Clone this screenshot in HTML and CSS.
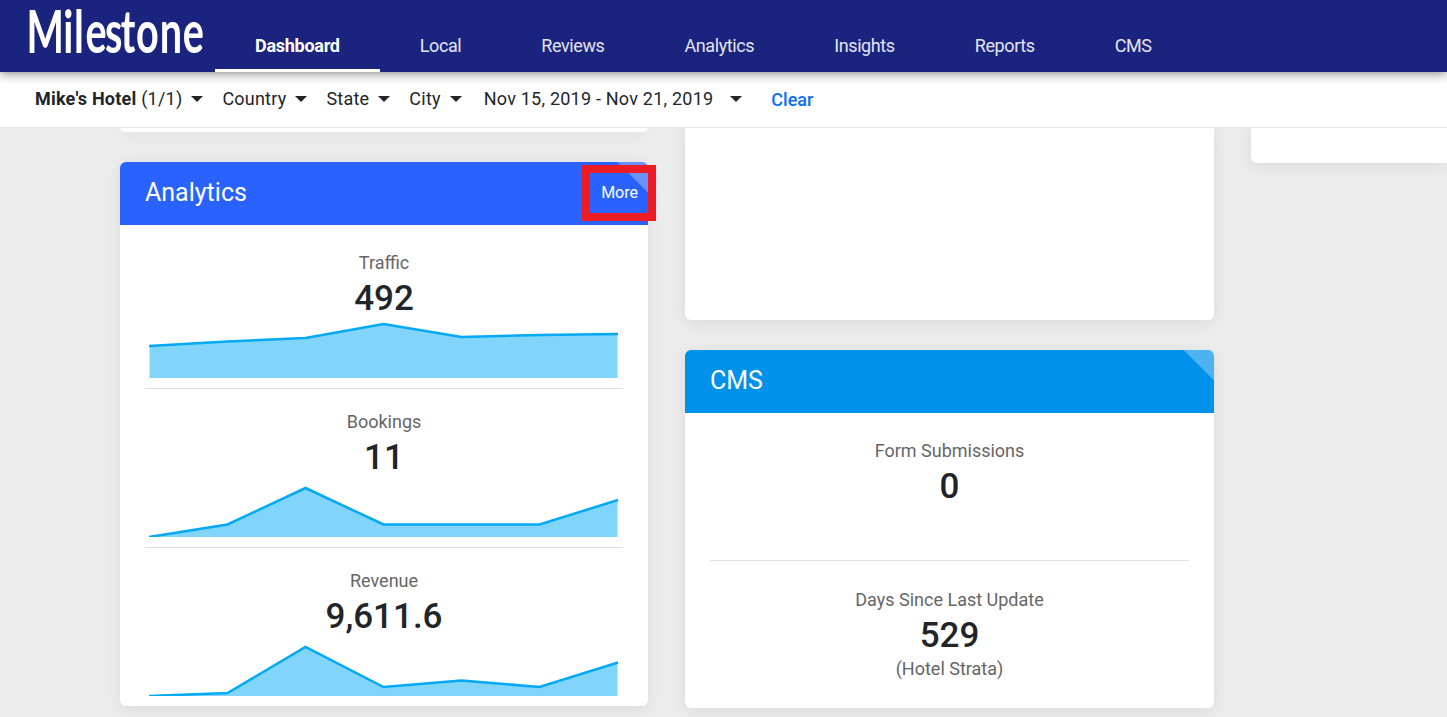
FILE: index.html
```
<!DOCTYPE html>
<html lang="en">
<head>
  <meta charset="UTF-8">
  <title>Milestone Dashboard</title>
  <link rel="stylesheet" href="styles.css">
</head>
<body>
  <header class="navbar">
    <svg class="logo" width="215" height="72" viewBox="0 0 215 72">
      <text transform="scale(0.66 1)" y="53" x="40 96 112 129.5 159 183 206 242 277">Milestone</text>
    </svg>
    <nav>
      <ul class="nav-links">
        <li class="active"><a href="#">Dashboard</a></li>
        <li><a href="#">Local</a></li>
        <li><a href="#">Reviews</a></li>
        <li><a href="#">Analytics</a></li>
        <li><a href="#">Insights</a></li>
        <li><a href="#">Reports</a></li>
        <li><a href="#">CMS</a></li>
      </ul>
    </nav>
  </header>

  <div class="filters">
    <div class="filter"><span><b>Mike's Hotel</b> (1/1)</span><i class="caret"></i></div>
    <div class="filter"><span>Country</span><i class="caret"></i></div>
    <div class="filter"><span>State</span><i class="caret"></i></div>
    <div class="filter"><span>City</span><i class="caret"></i></div>
    <div class="filter dates"><span>Nov 15, 2019 - Nov 21, 2019</span><i class="caret"></i></div>
    <a class="clear" href="#">Clear</a>
  </div>

  <main class="board">
    <div class="column">
      <section class="card cut cut-small"></section>
      <section class="card analytics">
        <div class="card-head">
          <h2>Analytics</h2>
          <a class="more" href="#">More</a>
          <div class="highlight"></div>
        </div>
        <div class="card-body">
          <div class="metric">
            <div class="label">Traffic</div>
            <div class="value">492</div>
            <svg class="chart" width="478" height="58">
              <polygon points="4.5,26 82.5,21.5 160.5,18 238.5,4 316.5,17 394.5,15 472.5,14 472.5,58 4.5,58"/>
              <polyline points="4,26 82.5,21.5 160.5,18 238.5,4 316.5,17 394.5,15 473,14"/>
            </svg>
          </div>
          <div class="metric">
            <div class="label">Bookings</div>
            <div class="value">11</div>
            <svg class="chart" width="478" height="58">
              <polygon points="4.5,58 82.5,45.5 160.5,9 238.5,45.5 316.5,45.5 394.5,45.5 472.5,21 472.5,58"/>
              <polyline points="4,58 82.5,45.5 160.5,9 238.5,45.5 316.5,45.5 394.5,45.5 473,21"/>
            </svg>
          </div>
          <div class="metric">
            <div class="label">Revenue</div>
            <div class="value">9,611.6</div>
            <svg class="chart" width="478" height="58">
              <polygon points="4.5,58 82.5,55 160.5,9 238.5,49 316.5,42.5 394.5,49 472.5,24.5 472.5,58"/>
              <polyline points="4,58 82.5,55 160.5,9 238.5,49 316.5,42.5 394.5,49 473,24.5"/>
            </svg>
          </div>
        </div>
      </section>
    </div>

    <div class="column">
      <section class="card cut cut-large"></section>
      <section class="card cms">
        <div class="card-head">
          <h2>CMS</h2>
        </div>
        <div class="card-body">
          <div class="metric">
            <div class="label">Form Submissions</div>
            <div class="value">0</div>
          </div>
          <div class="metric">
            <div class="label">Days Since Last Update</div>
            <div class="value">529</div>
            <div class="label sub">(Hotel Strata)</div>
          </div>
        </div>
      </section>
    </div>

    <div class="column">
      <section class="card cut cut-medium"></section>
    </div>
  </main>
</body>
</html>
```
FILE: styles.css
```
* {
  margin: 0;
  padding: 0;
  box-sizing: border-box;
}

body {
  font-family: Roboto, sans-serif;
  font-size: 18px;
  color: #212529;
  background: #ececec;
  height: 100vh;
  overflow: hidden;
  display: flex;
  flex-direction: column;
}

a {
  text-decoration: none;
}

/* top bar */
.navbar {
  display: flex;
  height: 72px;
  flex: none;
  background: #1a237e;
  box-shadow: 0 2px 10px rgba(0, 0, 0, 0.45);
  position: relative;
  z-index: 2;
}

.logo {
  fill: #fff;
  font-family: Lato, sans-serif;
  font-size: 60px;
  font-weight: 700;
}

.nav-links {
  display: flex;
  height: 72px;
  list-style: none;
}

.nav-links li {
  padding: 35px 40px 0;
  line-height: 22px;
  letter-spacing: -0.4px;
}

.nav-links a {
  color: #e4e5f0;
}

.nav-links .active {
  border-bottom: 3px solid #fff;
  letter-spacing: -0.27px;
}

.nav-links .active a {
  color: #fff;
  font-weight: 700;
}

/* filter row */
.filters {
  display: flex;
  align-items: center;
  height: 56px;
  flex: none;
  padding: 0 35px 2px;
  background: #fff;
  border-bottom: 1px solid #e6e6e6;
  letter-spacing: 0.22px;
  gap: 19px;
  position: relative;
  z-index: 1;
}

.filter {
  display: flex;
  align-items: center;
  gap: 9px;
  white-space: nowrap;
}

.filter b {
  font-weight: 700;
}

.caret {
  border: 6px solid transparent;
  border-top: 6px solid #212529;
  border-bottom: 0;
  margin-top: 1px;
}

.dates {
  margin-left: 3px;
}

.dates .caret {
  margin-left: 8px;
}

.clear {
  margin: 2px 0 0 10px;
  color: #0d6ef5;
  font-weight: 500;
  letter-spacing: 0;
}

/* cards */
.board {
  display: flex;
  gap: 37px;
  flex: 1;
  min-height: 0;
  margin-top: -1px;
  padding-left: 120px;
}

.column {
  display: flex;
  flex-direction: column;
  gap: 30px;
  width: 528px;
  flex: none;
}

.column:nth-child(2) {
  width: 529px;
}

.column:last-child {
  flex: 1;
  min-width: 0;
}

.card {
  background: #fff;
  border-radius: 6px;
  box-shadow: 0 3px 16px rgba(0, 0, 0, 0.08);
}

.cut {
  border-radius: 0 0 6px 6px;
}

.cut-small {
  height: 5px;
}

.cut-medium {
  height: 36px;
  border-bottom-right-radius: 0;
}

.cut-large {
  height: 193px;
}

.card-head {
  display: flex;
  align-items: center;
  justify-content: space-between;
  height: 63px;
  padding: 0 10px 2px 25px;
  border-radius: 6px 6px 0 0;
  color: #fff;
  position: relative;
}

.card-head::after {
  content: "";
  position: absolute;
  top: 0;
  right: 0;
  width: 31px;
  height: 31px;
  border-top-right-radius: 6px;
  background: linear-gradient(to top right, transparent 50%, rgba(255, 255, 255, 0.3) 50%);
}

.card-head h2 {
  font-size: 25px;
  font-weight: 400;
}

.analytics .card-head {
  background: #2962ff;
}

.cms .card-head {
  background: #0091ea;
}

.more {
  color: #fff;
  font-size: 16px;
}

.highlight {
  position: absolute;
  top: 3px;
  right: -8px;
  width: 74px;
  height: 56px;
  border: 8px solid #ed1c24;
  z-index: 1;
}

.card-body {
  padding: 5px 25px 0;
}

.metric {
  padding: 20px 0 10px;
  border-bottom: 1px solid #e0e0e0;
  text-align: center;
}

.metric:last-child {
  border-bottom: 0;
}

.label {
  color: #666;
  line-height: 26px;
}

.sub {
  line-height: 24px;
}

.value {
  font-size: 35px;
  font-weight: 500;
  line-height: 42px;
  padding-top: 2px;
}

.chart {
  display: block;
}

.chart polygon {
  fill: #81d4fa;
}

.chart polyline {
  fill: none;
  stroke: #03a9f4;
  stroke-width: 2.5;
}

.cms .metric {
  height: 143px;
}

.cms .metric:last-child {
  height: 147px;
  padding-top: 26px;
}
```
